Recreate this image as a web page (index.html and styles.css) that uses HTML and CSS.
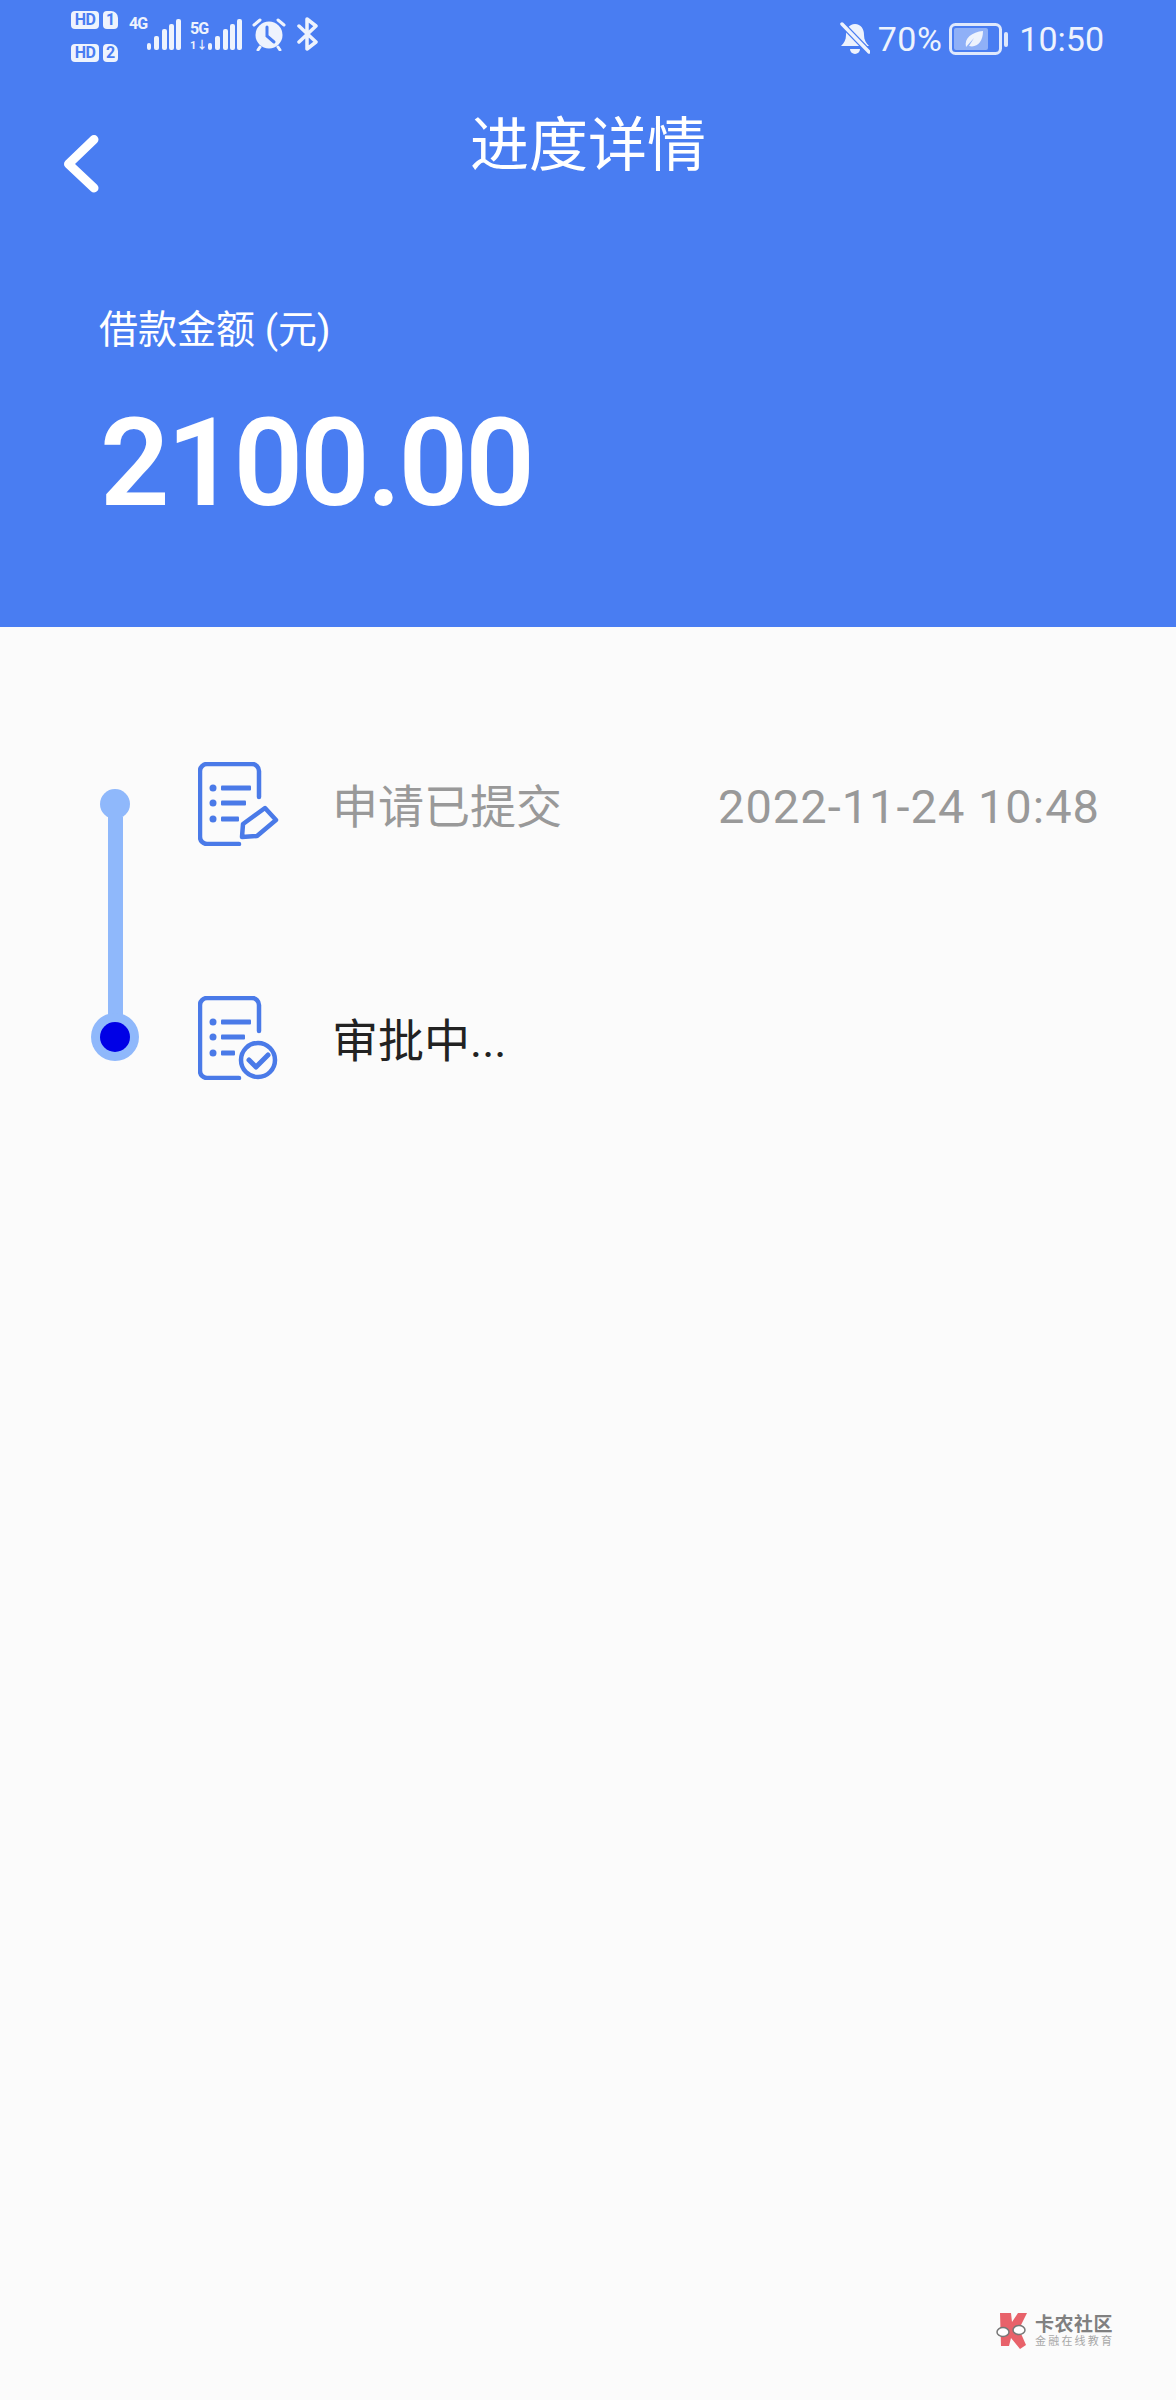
FILE: index.html
```html
<!DOCTYPE html>
<html lang="zh">
<head>
<meta charset="utf-8">
<title>进度详情</title>
<link rel="stylesheet" href="styles.css">
</head>
<body>
<header class="hero">
  <div class="status">
    <div class="status-left">
      <div class="sims">
        <div class="sim"><span class="hd">HD</span><span class="slot">1</span></div>
        <div class="sim"><span class="hd">HD</span><span class="slot">2</span></div>
      </div>
      <div class="net"><span class="net-label">4G</span>
        <svg class="bars" width="34" height="32" viewBox="0 0 34 32"><g fill="#eef3fd"><rect x="0" y="24" width="4" height="7" rx="2"/><rect x="7" y="17" width="5" height="14" rx="2"/><rect x="15" y="10" width="5" height="21" rx="2"/><rect x="22" y="5" width="5" height="26" rx="2"/><rect x="29" y="0" width="5" height="31" rx="2"/></g></svg>
      </div>
      <div class="net net-5g"><span class="net-stack"><span class="net-label">5G</span><span class="net-arrows">1↓</span></span>
        <svg class="bars" width="34" height="32" viewBox="0 0 34 32"><g fill="#eef3fd"><rect x="0" y="24" width="4" height="7" rx="2"/><rect x="7" y="17" width="5" height="14" rx="2"/><rect x="15" y="10" width="5" height="21" rx="2"/><rect x="22" y="5" width="5" height="26" rx="2"/><rect x="29" y="0" width="5" height="31" rx="2"/></g></svg>
      </div>
      <svg class="alarm" width="34" height="34" viewBox="0 0 34 34"><circle cx="17" cy="18" r="13.500" fill="#eef3fd"/><path d="M2 8 8 3M32 8 26 3M8 30 6 33M26 30 28 33" stroke="#eef3fd" stroke-width="3" stroke-linecap="round"/><path d="M15 10v9l7 6" fill="none" stroke="#497df2" stroke-width="3" stroke-linecap="round"/></svg>
      <svg class="bt" width="22" height="34" viewBox="0 0 22 34"><path d="M2 9 19 25 10 32V2l9 7L2 25" fill="none" stroke="#eef3fd" stroke-width="3.500" stroke-linejoin="round" stroke-linecap="round"/></svg>
    </div>
    <div class="status-right">
      <svg class="bell" width="30" height="34" viewBox="0 0 30 34"><path d="M15 2c6 0 9 5 9 11 0 5 2 8 5 11H1c3-3 5-6 5-11 0-6 3-11 9-11Z" fill="#eef3fd"/><path d="M10 27a5 5 0 0 0 10 0Z" fill="#eef3fd"/><path d="M2 2l27 28" stroke="#497df2" stroke-width="6"/><path d="M2 2l27 28" stroke="#eef3fd" stroke-width="3.500" stroke-linecap="round"/></svg>
      <span class="pct">70%</span>
      <svg class="battery" width="60" height="32" viewBox="0 0 60 32"><rect x="1.500" y="1.500" width="50" height="29" rx="5" fill="none" stroke="#dfe8fc" stroke-width="3"/><rect x="5" y="5" width="34" height="22" rx="2" fill="#8fb0f7"/><path d="M17 24c-2-9 6-15 17-16 0 11-6 17-14 15l5-8Z" fill="#eef3fd"/><rect x="55" y="9" width="4" height="15" rx="2" fill="#dfe8fc"/></svg>
      <span class="clock">10:50</span>
    </div>
  </div>
  <div class="nav">
    <svg class="back" width="40" height="68" viewBox="0 0 40 68"><path d="M34 9.500 8.500 34 34 58" fill="none" stroke="#fff" stroke-width="9" stroke-linecap="round" stroke-linejoin="round"/></svg>
    <h1 class="title">进度详情</h1>
  </div>
  <div class="amount-block">
    <div class="amount-label">借款金额 (元)</div>
    <div class="amount">2100.00</div>
  </div>
</header>

<main class="timeline">
  <div class="rail">
    <span class="dot"></span>
    <span class="line"></span>
    <span class="dot-current"><span class="dot-inner"></span></span>
  </div>
  <div class="steps">
    <div class="step">
      <svg class="step-icon" width="82" height="84" viewBox="0 0 82 84">
        <g fill="none" stroke="#4a7ae8" stroke-width="4.500" stroke-linecap="round" stroke-linejoin="round">
          <path d="M61 35V9a7 7 0 0 0-7-7H9a7 7 0 0 0-7 7v66a7 7 0 0 0 7 7h32"/>
          <path d="M67 46 78 58 59 74 44 75 45 62Z"/>
        </g>
        <g fill="#4a7ae8"><circle cx="15" cy="26" r="3.500"/><rect x="23" y="23.500" width="30" height="5" rx="1"/><circle cx="15" cy="41" r="3.500"/><rect x="23" y="38.500" width="25" height="5" rx="1"/><circle cx="15" cy="57" r="3.500"/><rect x="23" y="54.500" width="18" height="5" rx="1"/></g>
      </svg>
      <span class="step-name step-done">申请已提交</span>
      <span class="step-time">2022-11-24 10:48</span>
    </div>
    <div class="step">
      <svg class="step-icon" width="82" height="84" viewBox="0 0 82 84">
        <g fill="none" stroke="#4a7ae8" stroke-width="4.500" stroke-linecap="round" stroke-linejoin="round">
          <path d="M61 35V9a7 7 0 0 0-7-7H9a7 7 0 0 0-7 7v66a7 7 0 0 0 7 7h32"/>
          <circle cx="60" cy="64" r="17"/>
          <path d="M51 64 58 71 70 59" stroke-width="5"/>
        </g>
        <g fill="#4a7ae8"><circle cx="15" cy="26" r="3.500"/><rect x="23" y="23.500" width="30" height="5" rx="1"/><circle cx="15" cy="41" r="3.500"/><rect x="23" y="38.500" width="24" height="5" rx="1"/><circle cx="15" cy="57" r="3.500"/><rect x="23" y="54.500" width="14" height="5" rx="1"/></g>
      </svg>
      <span class="step-name step-active">审批中...</span>
    </div>
  </div>
</main>

<div class="watermark">
  <svg class="wm-logo" width="38" height="38" viewBox="0 0 38 38"><path d="M5 1H16L17 10 23 1H32L24 17 31 33 25 37 16 26 14 34H6Z" fill="#e8626a"/><ellipse cx="8" cy="20" rx="6" ry="4.500" fill="#fff" stroke="#777" stroke-width="1.500"/><ellipse cx="24" cy="18" rx="6" ry="4.500" fill="#fff" stroke="#777" stroke-width="1.500"/></svg>
  <div class="wm-text">
    <span class="wm-name">卡农社区</span>
    <span class="wm-sub">金融在线教育</span>
  </div>
</div>
</body>
</html>
```
FILE: styles.css
```css
* { box-sizing: border-box; }
html, body { margin: 0; padding: 0; }
body {
  position: relative;
  width: 1176px;
  height: 2400px;
  overflow: hidden;
  background: #fbfbfb;
  font-family: Roboto, "Noto Sans CJK SC", sans-serif;
}
.hero {
  height: 627px;
  background: #497df2;
  color: #fff;
  display: flex;
  flex-direction: column;
}
.status {
  height: 74px;
  padding: 4px 72px 0 71px;
  display: flex;
  justify-content: space-between;
  align-items: center;
  color: #eef3fd;
}
.status-left, .status-right { display: flex; align-items: center; }
.sims { display: flex; flex-direction: column; gap: 15px; margin-top: -5px; }
.sim { display: flex; gap: 4px; }
.hd, .slot {
  background: #eef3fd;
  color: #497df2;
  font-size: 16px;
  font-weight: 700;
  line-height: 18px;
  height: 18px;
  text-align: center;
  border-radius: 4px;
}
.hd { width: 28px; letter-spacing: -0.5px; }
.slot { width: 15px; border-top-right-radius: 7px; }
.net { display: flex; align-items: flex-end; margin-left: 11px; height: 34px; margin-top: -11px; }
.net-5g { margin-left: 9px; }
.net-label { font-size: 16px; font-weight: 700; line-height: 14px; letter-spacing: -1px; display: block; align-self: flex-start; }
.net-stack { display: flex; flex-direction: column; gap: 5px; }
.net-arrows { font-size: 11px; font-weight: 700; line-height: 10px; }
.alarm { margin: -11px 0 0 10px; }
.bt { margin: -11px 0 0 11px; }
.bell { margin-right: 8px; }
.pct, .clock { font-size: 34px; line-height: 40px; }
.pct { letter-spacing: 0.5px; }
.battery { margin-left: 7px; }
.clock { margin-left: 10px; }
.nav {
  height: 110px;
  position: relative;
}
.back { position: absolute; left: 60px; top: 56px; }
.title {
  margin: 0;
  padding-top: 36px;
  text-align: center;
  font-size: 59px;
  line-height: 72px;
  font-weight: 400;
}
.amount-block { padding: 122px 0 0 100px; }
.amount-label { margin-left: -1px; font-size: 39px; line-height: 48px; }
.amount {
  margin-top: 40px;
  font-size: 122px;
  line-height: 140px;
  font-weight: 600;
  letter-spacing: -3px;
}
.timeline {
  display: flex;
  padding: 135px 76px 0 91px;
}
.rail {
  width: 48px;
  display: flex;
  flex-direction: column;
  align-items: center;
  padding-top: 27px;
}
.dot { width: 30px; height: 30px; border-radius: 50%; background: #8fb8fb; flex: none; }
.line { width: 15px; height: 198px; margin-top: -2px; background: #8fb8fb; flex: none; }
.dot-current {
  width: 48px;
  height: 48px;
  margin-top: -2px;
  border-radius: 50%;
  background: #8fb8fb;
  display: flex;
  align-items: center;
  justify-content: center;
  flex: none;
}
.dot-inner { width: 30px; height: 30px; border-radius: 50%; background: #0000e6; }
.steps { flex: 1; margin-left: 59px; display: flex; flex-direction: column; gap: 150px; }
.step { display: flex; align-items: center; height: 84px; }
.step-name { margin: 6px 0 0 52px; font-size: 46px; line-height: 56px; }
.step-active { color: #222; }
.step-done { color: #999; }
.step-time { margin: 6px 0 0 auto; font-size: 47px; line-height: 56px; letter-spacing: 1px; color: #999; }
.watermark {
  position: absolute;
  left: 995px;
  top: 2312px;
  display: flex;
  align-items: center;
  gap: 2px;
}
.wm-text { display: flex; flex-direction: column; color: #808080; }
.wm-name { font-size: 19px; line-height: 21px; font-weight: 700; letter-spacing: 0.5px; }
.wm-sub { font-size: 11px; line-height: 13px; letter-spacing: 2.200px; color: #a8a8a8; }
```
